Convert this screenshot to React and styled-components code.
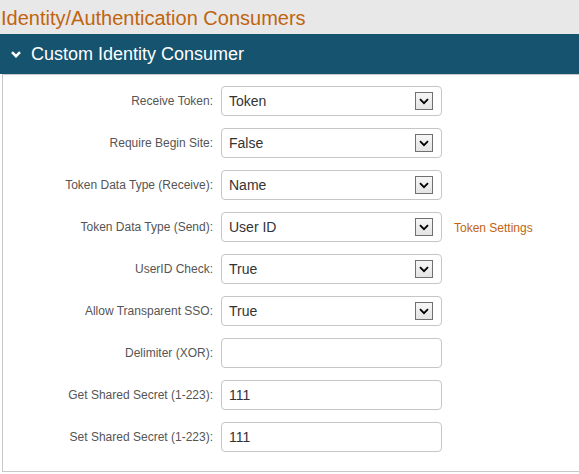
import { Fragment } from "react";
import styled, { createGlobalStyle } from "styled-components";

const GlobalStyle = createGlobalStyle`
	body {
		margin: 0;
		background: #ffffff;
		font-family: "Liberation Sans", Arial, sans-serif;
	}
`;

const TitleBar = styled.div`
	height: 34px;
	background: #e8e8e8;
	display: flex;
	align-items: center;
	padding: 2px 0 0 1px;
	box-sizing: border-box;
	font-size: 20px;
	color: #c0640f;
	white-space: nowrap;
`;

const PanelHeader = styled.div`
	height: 40px;
	background: #15536f;
	display: flex;
	align-items: center;
	gap: 10px;
	padding-left: 11px;
	color: #ffffff;
	font-size: 18px;
	white-space: nowrap;
`;

const PanelBody = styled.div`
	margin-left: 2px;
	border: 1px solid #c8c8c8;
	border-right: none;
	padding: 11px 0 19px;
	display: grid;
	grid-template-columns: 210px 221px auto;
	column-gap: 8px;
	row-gap: 12px;
	align-items: center;
`;

const Label = styled.label`
	text-align: right;
	font-size: 12px;
	color: #555555;
	white-space: nowrap;
`;

const Field = styled.div`
	height: 30px;
	box-sizing: border-box;
	border: 1px solid #c6c6c6;
	border-radius: 4px;
	background: #ffffff;
	display: flex;
	align-items: center;
	justify-content: space-between;
	padding: 0 8px 0 7px;
	font-size: 14px;
	color: #333333;
`;

const DropButton = styled.span`
	width: 18px;
	height: 18px;
	box-sizing: border-box;
	border: 1px solid #707070;
	background: linear-gradient(#f6f6f6, #e4e4e4);
	display: flex;
	align-items: center;
	justify-content: center;
`;

const Link = styled.a`
	font-size: 12px;
	color: #c0640f;
	padding-left: 4px;
	white-space: nowrap;
`;

const Chevron = ({ size = 10, color = "#000", width = 2 }) => (
	<svg width={size} height={size * 0.7} viewBox="0 0 10 7">
		<path d="M1 1.2 L5 5.2 L9 1.2" fill="none" stroke={color} strokeWidth={width} />
	</svg>
);

const rows = [
	{ label: "Receive Token:", value: "Token", select: true },
	{ label: "Require Begin Site:", value: "False", select: true },
	{ label: "Token Data Type (Receive):", value: "Name", select: true },
	{ label: "Token Data Type (Send):", value: "User ID", select: true, link: "Token Settings" },
	{ label: "UserID Check:", value: "True", select: true },
	{ label: "Allow Transparent SSO:", value: "True", select: true },
	{ label: "Delimiter (XOR):", value: "" },
	{ label: "Get Shared Secret (1-223):", value: "111" },
	{ label: "Set Shared Secret (1-223):", value: "111" },
];

export default function App() {
	return (
		<>
			<GlobalStyle />
			<TitleBar>Identity/Authentication Consumers</TitleBar>
			<PanelHeader>
				<Chevron size={10} color="#ffffff" width={2.6} />
				Custom Identity Consumer
			</PanelHeader>
			<PanelBody>
				{rows.map((row) => (
					<Fragment key={row.label}>
						<Label>{row.label}</Label>
						<Field>
							<span>{row.value}</span>
							{row.select && (
								<DropButton>
									<Chevron size={10} width={1.8} />
								</DropButton>
							)}
						</Field>
						<div>{row.link && <Link>{row.link}</Link>}</div>
					</Fragment>
				))}
			</PanelBody>
		</>
	);
}
